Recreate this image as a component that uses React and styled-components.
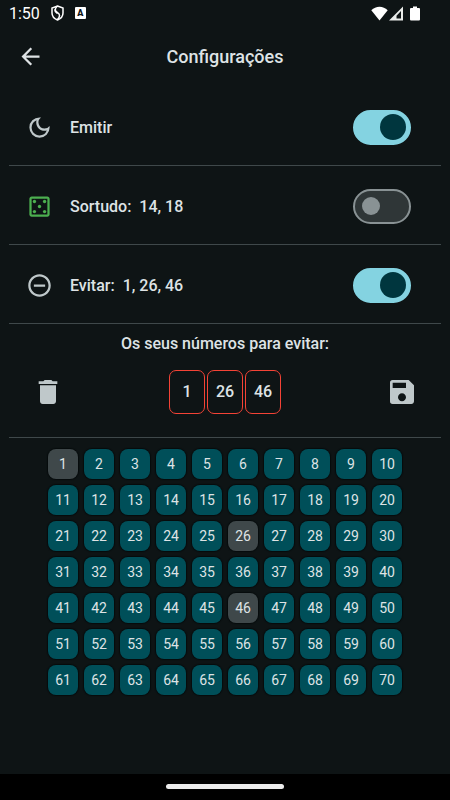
import React, { useState } from "react";
import styled, { createGlobalStyle } from "styled-components";
import {
  MdArrowBack,
  MdDelete,
  MdOutlineCasino,
  MdOutlineDarkMode,
  MdRemoveCircleOutline,
  MdSave,
} from "react-icons/md";

const GlobalStyle = createGlobalStyle`
  *, *::before, *::after { box-sizing: border-box; }
  body { margin: 0; background: #0e1415; }
  button, input { font: inherit; color: inherit; }
`;

const Screen = styled.div`
  display: flex;
  flex-direction: column;
  min-height: 100vh;
  background: #0e1415;
  color: #dee3e5;
  font-family: Roboto, "Liberation Sans", sans-serif;
  font-size: 16px;
  line-height: 20px;
  font-weight: 500;
`;

const StatusBar = styled.header`
  display: flex;
  align-items: center;
  justify-content: space-between;
  height: 26px;
  padding: 0 30px 0 9px;
  color: #fff;
  font-weight: 400;
`;

const StatusGroup = styled.div`
  display: flex;
  align-items: center;
  gap: ${(p) => p.$gap}px;

  svg { display: block; }
`;

const Clock = styled.time`
  padding-top: 2px;
`;

const AppBar = styled.div`
  display: grid;
  grid-template-columns: 44px 1fr 44px;
  align-items: center;
  height: 61px;
  padding: 0 8px;
`;

const Title = styled.h1`
  margin: 0;
  text-align: center;
  font-size: 18px;
  line-height: 24px;
  font-weight: 500;
`;

const IconButton = styled.button`
  display: flex;
  align-items: center;
  justify-content: center;
  width: 44px;
  height: 44px;
  padding: 0;
  border: 0;
  border-radius: 50%;
  background: none;
  color: ${(p) => p.$color || "#bfc8ca"};
  cursor: pointer;
`;

const Main = styled.main`
  flex: 1;
  padding: 0 9px;
`;

const SettingRow = styled.label`
  display: flex;
  align-items: center;
  height: 79px;
  padding: 2px 30px 0 17px;
  border-bottom: 1px solid #3f484a;
  cursor: pointer;
`;

const RowIcon = styled.span`
  display: flex;
  width: 44px;
  color: ${(p) => p.$color};
`;

const RowText = styled.span`
  flex: 1;
  padding-top: 2px;
  white-space: pre;
`;

const Switch = styled.input`
  appearance: none;
  display: flex;
  align-items: center;
  width: 58px;
  height: 35px;
  margin: 0;
  padding: 0 7px;
  border: 2px solid #899294;
  border-radius: 18px;
  background: #2f3637;
  cursor: pointer;

  &::before {
    content: "";
    width: 18px;
    height: 18px;
    border-radius: 50%;
    background: #899294;
  }

  &:checked {
    justify-content: flex-end;
    padding: 0 3px;
    border-color: #84d3e1;
    background: #84d3e1;
  }

  &:checked::before {
    width: 26px;
    height: 26px;
    background: #00363e;
  }
`;

const Selection = styled.section`
  padding-top: 10px;
  height: 114px;
  border-bottom: 1px solid #3f484a;
`;

const SelectionTitle = styled.h2`
  margin: 0;
  text-align: center;
  font-size: 16px;
  line-height: 20px;
  font-weight: 500;
`;

const SelectionBar = styled.div`
  display: flex;
  align-items: center;
  justify-content: space-between;
  margin-top: 16px;
  padding: 0 17px;
`;

const Chips = styled.div`
  display: flex;
  gap: 2px;
`;

const Chip = styled.span`
  display: flex;
  align-items: center;
  justify-content: center;
  width: 36px;
  height: 44px;
  border: 1px solid #f44336;
  border-radius: 7px;
`;

const NumberGrid = styled.div`
  display: grid;
  grid-template-columns: repeat(10, 30px);
  gap: 6px;
  justify-content: center;
  padding: 11px 0;
`;

const NumberButton = styled.button`
  height: 30px;
  padding: 0;
  border: 0;
  border-radius: 8px;
  background: ${(p) => (p.$picked ? "#3f484a" : "#004f59")};
  box-shadow: 0 0 1px 1px #060b0c;
  font-size: 14px;
  line-height: 20px;
  font-weight: 400;
  cursor: pointer;
`;

const NavBar = styled.footer`
  display: flex;
  justify-content: center;
  height: 26px;
  padding-top: 10px;
  background: #000;
`;

const NavHandle = styled.div`
  width: 118px;
  height: 5px;
  border-radius: 3px;
  background: #ececec;
`;

const ShieldIcon = () => (
  <svg width="13" height="16" viewBox="0 0 13 16" fill="none" stroke="#fff" strokeWidth="1.5" aria-hidden="true">
    <path d="M6.5 1 12 3v5c0 3.200-2.200 5.700-5.500 7C3.200 13.700 1 11.200 1 8V3z" />
    <path d="M6.500 1C3.700 3.200 3.500 5.700 6.300 7.300 9.300 9 9.200 12 6.500 14.600M3.700 4.500C3.800 7 5 7.500 6.500 8.500" />
  </svg>
);

const LetterBadge = styled.span`
  display: flex;
  align-items: center;
  justify-content: center;
  width: 11px;
  height: 12px;
  border-radius: 1px;
  background: #fff;
  color: #0e1415;
  font-size: 9px;
  line-height: 12px;
  font-weight: 900;
`;

const WifiIcon = () => (
  <svg width="17" height="15" viewBox="0 0 17 15" aria-hidden="true">
    <path fill="#fff" d="M8.500 14.500.3 4.300C2.600 2 5.400.7 8.500.7s5.900 1.300 8.200 3.600z" />
  </svg>
);

const SignalIcon = () => (
  <svg width="14" height="15" viewBox="0 0 14 15" aria-hidden="true">
    <path fill="#e9ecea" fillRule="evenodd" d="M14 .5v14H0zM12 5v7.500H7.500V9.700z" />
  </svg>
);

const BatteryIcon = () => (
  <svg width="10" height="15" viewBox="0 0 10 15" aria-hidden="true">
    <path fill="#fff" d="M3 .5h4V2h2a1 1 0 0 1 1 1v10.500a1 1 0 0 1-1 1H1a1 1 0 0 1-1-1V3a1 1 0 0 1 1-1h2z" />
  </svg>
);

const numbers = Array.from({ length: 70 }, (_, i) => i + 1);

export default function App() {
  const [dark, setDark] = useState(true);
  const [lucky, setLucky] = useState(false);
  const [avoid, setAvoid] = useState(true);
  const [picked, setPicked] = useState([1, 26, 46]);

  const toggle = (n) =>
    setPicked((list) =>
      list.includes(n) ? list.filter((x) => x !== n) : [...list, n].sort((a, b) => a - b)
    );

  const rows = [
    { id: "dark", text: "Emitir", Icon: MdOutlineDarkMode, color: "#bfc8ca", on: dark, set: setDark },
    { id: "lucky", text: "Sortudo:  14, 18", Icon: MdOutlineCasino, color: "#4caf50", on: lucky, set: setLucky },
    { id: "avoid", text: `Evitar:  ${picked.join(", ")}`, Icon: MdRemoveCircleOutline, color: "#bfc8ca", on: avoid, set: setAvoid },
  ];

  return (
    <>
      <GlobalStyle />
      <Screen>
        <StatusBar>
          <StatusGroup $gap={11}>
            <Clock>1:50</Clock>
            <ShieldIcon />
            <LetterBadge>A</LetterBadge>
          </StatusGroup>
          <StatusGroup $gap={1}>
            <WifiIcon />
            <StatusGroup $gap={7}>
              <SignalIcon />
              <BatteryIcon />
            </StatusGroup>
          </StatusGroup>
        </StatusBar>
        <AppBar>
          <IconButton type="button" aria-label="Voltar" $color="#dee3e5">
            <MdArrowBack size={27} />
          </IconButton>
          <Title>Configurações</Title>
        </AppBar>
        <Main>
          {rows.map(({ id, text, Icon, color, on, set }) => (
            <SettingRow key={id} htmlFor={id}>
              <RowIcon $color={color}>
                <Icon size={27} />
              </RowIcon>
              <RowText>{text}</RowText>
              <Switch id={id} type="checkbox" role="switch" checked={on} onChange={() => set(!on)} />
            </SettingRow>
          ))}
          <Selection>
            <SelectionTitle>Os seus números para evitar:</SelectionTitle>
            <SelectionBar>
              <IconButton type="button" aria-label="Apagar" onClick={() => setPicked([])}>
                <MdDelete size={32} />
              </IconButton>
              <Chips>
                {picked.map((n) => (
                  <Chip key={n}>{n}</Chip>
                ))}
              </Chips>
              <IconButton type="button" aria-label="Guardar">
                <MdSave size={32} />
              </IconButton>
            </SelectionBar>
          </Selection>
          <NumberGrid>
            {numbers.map((n) => (
              <NumberButton
                key={n}
                type="button"
                aria-pressed={picked.includes(n)}
                $picked={picked.includes(n)}
                onClick={() => toggle(n)}
              >
                {n}
              </NumberButton>
            ))}
          </NumberGrid>
        </Main>
        <NavBar>
          <NavHandle />
        </NavBar>
      </Screen>
    </>
  );
}
